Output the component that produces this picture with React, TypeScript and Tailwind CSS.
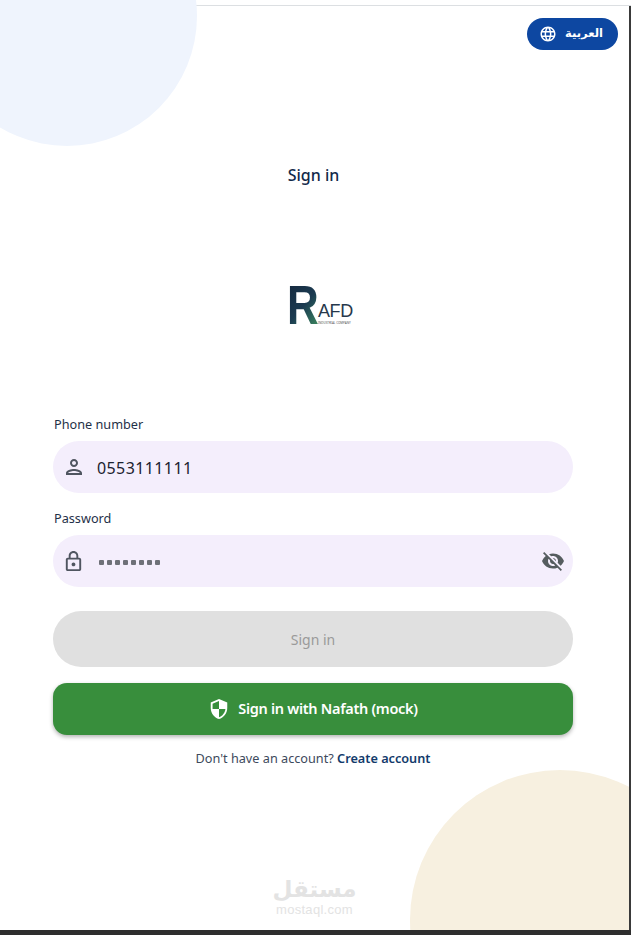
import {
  MdLanguage,
  MdOutlineLock,
  MdOutlinePerson,
  MdSecurity,
  MdVisibilityOff,
} from "react-icons/md";

const font = "font-['Noto_Sans','Open_Sans',sans-serif]";

const Logo = () => (
  <div className="ml-[13px] flex h-[40px] w-[64px] items-start">
    <div className="-ml-[2px] h-[40px] w-[31px] shrink-0">
      <span className="block w-[42px] origin-top-left scale-x-[0.8] bg-gradient-to-br from-[#15293f] via-[#1b3a50] to-[#3f8a5c] bg-clip-text font-['Liberation_Sans',sans-serif] text-[55px] leading-[40px] font-bold text-transparent">
        R
      </span>
    </div>
    <div className="flex flex-col items-start pt-[17px]">
      <span className="font-['Liberation_Sans',sans-serif] text-[18px] leading-[19px] tracking-[-0.4px] text-[#26384c]">
        AFD
      </span>
      <span className="text-[3px] leading-[4px] whitespace-nowrap text-[#555]">INDUSTRIAL COMPANY</span>
    </div>
  </div>
);

export default function App() {
  return (
    <div className={`${font} relative flex h-[935px] w-[631px] flex-col overflow-hidden bg-white`}>
      <div className="h-[6px] shrink-0 border-b border-[#dcdfe2] bg-white" />

      <div className="absolute top-[-114px] left-[-63px] h-[260px] w-[260px] rounded-full bg-[#eff4fd]" />
      <div className="absolute top-[770px] left-[410px] h-[300px] w-[300px] rounded-full bg-[#f7f0e0]" />

      <div className="relative flex min-h-0 grow flex-col border-r-2 border-[#3a3a3a]">
        <div className="flex justify-end pt-[12px] pr-[11px]">
          <button className="flex h-[32px] w-[91px] items-center justify-end gap-[8px] rounded-full bg-[#0d47a1] pr-[15px] text-white">
            <MdLanguage className="text-[18px]" />
            <span className="font-['DejaVu_Sans',sans-serif] text-[11.5px] leading-none font-bold">العربية</span>
          </button>
        </div>

        <h1 className="mt-[113px] pr-[2px] text-center text-[16px] leading-[24px] font-medium text-[#12294a]">Sign in</h1>

        <div className="mt-[98px] flex justify-center">
          <Logo />
        </div>

        <form className="mt-[88px] flex flex-col pl-[53px]">
          <label className="h-[24px] pl-[1px] text-[12.7px] leading-[22px] text-[#1f3148]">Phone number</label>
          <div className="mt-[4px] flex h-[52px] w-[520px] items-center rounded-[26px] bg-[#f4eefc] pl-[9px]">
            <MdOutlinePerson className="text-[24px] text-[#4f5560]" />
            <span className="mt-[2px] ml-[11px] text-[16px] tracking-[0.4px] text-[#1b2230]">0553111111</span>
          </div>

          <label className="mt-[13px] h-[24px] pl-[1px] text-[12.7px] leading-[24px] text-[#1f3148]">Password</label>
          <div className="mt-[5px] flex h-[52px] w-[520px] items-center justify-between rounded-[26px] bg-[#f4eefc] pr-[8px] pl-[9px]">
            <div className="flex items-center">
              <MdOutlineLock className="text-[23px] text-[#4f5560]" />
              <span className="mt-[2px] ml-[14px] flex gap-[3px]">
                {[0, 1, 2, 3, 4, 5, 6, 7].map((i) => (
                  <i key={i} className="h-[5px] w-[5px] rounded-[1px] bg-[#6e7078]" />
                ))}
              </span>
            </div>
            <MdVisibilityOff className="text-[24px] text-[#555c5f]" />
          </div>

          <button type="button" className="mt-[24px] h-[56px] w-[520px] rounded-[28px] bg-[#e0e0e0] text-[14px] text-[#9a9a9a]">
            Sign in
          </button>

          <button
            type="button"
            className="mt-[16px] flex h-[52px] w-[520px] items-center justify-center gap-[8px] rounded-[14px] bg-[#388e3c] text-[14.5px] font-semibold tracking-[-0.3px] text-white shadow-[0_2px_4px_rgba(0,0,0,0.3)]"
          >
            <MdSecurity className="text-[22px]" />
            Sign in with Nafath (mock)
          </button>

          <p className="mt-[13px] w-[520px] text-center text-[12.7px] leading-[20px] text-[#3d4a5c]">
            Don't have an account? <span className="font-semibold text-[#123a6b]">Create account</span>
          </p>
        </form>

        <div className="mt-auto mb-[13px] flex flex-col items-center">
          <span className="font-['DejaVu_Sans',sans-serif] text-[23px] leading-[27px] font-bold text-[#e3e3e3]">مستقل</span>
          <span className="font-['Liberation_Sans',sans-serif] text-[13px] leading-[14px] tracking-[0.3px] text-[#e3e3e3]">mostaql.com</span>
        </div>
      </div>

      <div className="relative h-[5px] shrink-0 bg-[#2e2e2e]" />
    </div>
  );
}
